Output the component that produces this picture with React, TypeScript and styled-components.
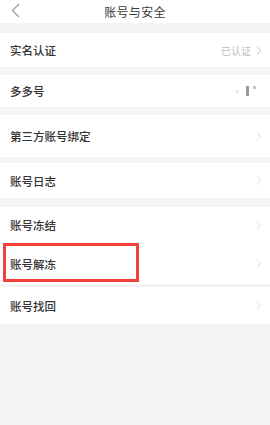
import styled, { createGlobalStyle } from "styled-components";

const GlobalStyle = createGlobalStyle`
    html, body {
        margin: 0;
        padding: 0;
        background: #f4f4f4;
    }
    body {
        font-family: "Noto Sans CJK SC", "Noto Sans", sans-serif;
    }
`;

type Item = {
    label: string;
    height: number;
    gap: number;
    value?: string;
    masked?: boolean;
    chevron?: boolean;
    marked?: boolean;
};

const items: Item[] = [
    { label: "实名认证", height: 34, gap: 8, value: "已认证", chevron: true },
    { label: "多多号", height: 32, gap: 8, masked: true },
    { label: "第三方账号绑定", height: 42, gap: 6, chevron: true },
    { label: "账号日志", height: 35, gap: 9, chevron: true },
    { label: "账号冻结", height: 36, gap: 0, chevron: true },
    { label: "账号解冻", height: 41, gap: 3, chevron: true, marked: true },
    { label: "账号找回", height: 37, gap: 0, chevron: true },
];

function Chevron({ color = "#cfcfcf" }: { color?: string }) {
    return (
        <svg width="6" height="11" viewBox="0 0 6 11">
            <path d="M1 1.5 L4.5 5.5 L1 9.5" fill="none" stroke={color} strokeWidth="1" />
        </svg>
    );
}

export default function App() {
    return (
        <Page>
            <GlobalStyle />
            <Header>
                <Back>
                    <svg width="9" height="15" viewBox="0 0 9 15">
                        <path d="M8 1 L1.5 7.5 L8 14" fill="none" stroke="#9a9a9a" strokeWidth="1.2" />
                    </svg>
                </Back>
                <Title>账号与安全</Title>
            </Header>
            <List>
                {items.map((it) => (
                    <Row key={it.label} $h={it.height} $gap={it.gap} $marked={it.marked}>
                        <Label>{it.label}</Label>
                        <Right>
                            {it.value && <Value>{it.value}</Value>}
                            {it.masked && (
                                <Masked>
                                    <i className="dot" />
                                    <i className="bar" />
                                    <i className="sq" />
                                </Masked>
                            )}
                            {it.chevron && <Chevron color={it.value ? "#c4c4c4" : "#dcdcdc"} />}
                        </Right>
                    </Row>
                ))}
            </List>
        </Page>
    );
}

const Page = styled.div`
    width: 270px;
    height: 425px;
    background: #f4f4f4;
    overflow: hidden;
`;

const Header = styled.div`
    height: 23px;
    background: #fff;
    display: flex;
    align-items: center;
    justify-content: center;
    position: relative;
    margin-bottom: 10px;
`;

const Back = styled.div`
    position: absolute;
    left: 11px;
    top: 3px;
    display: flex;
`;

const Title = styled.h1`
    margin: 0;
    font-size: 12px;
    font-weight: 400;
    color: #3a3a3a;
    letter-spacing: 0.3px;
`;

const List = styled.div`
    display: flex;
    flex-direction: column;
`;

const Row = styled.div<{ $h: number; $gap: number; $marked?: boolean }>`
    height: ${(p) => p.$h}px;
    margin-bottom: ${(p) => p.$gap}px;
    background: #fff;
    display: flex;
    align-items: center;
    justify-content: space-between;
    padding: 0 8px 0 10px;
    position: relative;

    ${(p) =>
        p.$marked &&
        `
        &::after {
            content: "";
            position: absolute;
            left: 3px;
            top: 0;
            width: 136px;
            height: 39px;
            border: 3px solid #f4403a;
            box-sizing: border-box;
        }
    `}
`;

const Label = styled.span`
    font-size: 11.5px;
    font-weight: 500;
    color: #333;
`;

const Right = styled.div`
    display: flex;
    align-items: center;
    gap: 5px;
`;

const Value = styled.span`
    font-size: 10px;
    color: #bdbdbd;
`;

const Masked = styled.div`
    display: flex;
    align-items: center;
    margin-right: 6px;

    i {
        display: block;
    }
    .dot {
        width: 3px;
        height: 3px;
        background: #e8e8e8;
        margin-right: 7px;
    }
    .bar {
        width: 3px;
        height: 10px;
        background: #9a9a9a;
        margin-right: 4px;
    }
    .sq {
        width: 3px;
        height: 3px;
        background: #c8c8c8;
        align-self: flex-start;
    }
`;
